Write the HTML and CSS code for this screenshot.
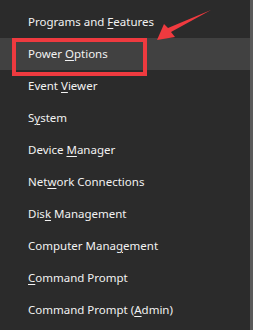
FILE: index.html
```html
<!DOCTYPE html>
<html>
<head>
<meta charset="utf-8">
<link rel="stylesheet" href="styles.css">
</head>
<body>
<div class="menu">
  <ul class="items">
    <li class="item">Programs and <u>F</u>eatures</li>
    <li class="item active">Power <u>O</u>ptions</li>
    <li class="item">Event <u>V</u>iewer</li>
    <li class="item">S<u>y</u>stem</li>
    <li class="item">Device <u>M</u>anager</li>
    <li class="item">Net<u>w</u>ork Connections</li>
    <li class="item">Dis<u>k</u> Management</li>
    <li class="item">Computer Mana<u>g</u>ement</li>
    <li class="item"><u>C</u>ommand Prompt</li>
    <li class="item">Command Prompt (<u>A</u>dmin)</li>
  </ul>
  <div class="mark"></div>
  <svg class="arrow" width="60" height="34" viewBox="0 0 60 34">
    <polygon points="1,32 8,16 12,20 55,2 15,24 19,29" fill="#f03a3f"/>
  </svg>
</div>
</body>
</html>
```
FILE: styles.css
```css
html, body {
  margin: 0;
  padding: 0;
  background: #2b2b2b;
}
.menu {
  position: relative;
  width: 253px;
  height: 330px;
  background: #2b2b2b;
  box-sizing: border-box;
  border-right: 3px solid #595959;
  overflow: hidden;
}
.items {
  list-style: none;
  margin: 0;
  padding: 6px 0 0 0;
}
.item {
  height: 32px;
  line-height: 32px;
  padding-left: 28px;
  font-family: "Noto Sans", "Open Sans", sans-serif;
  font-size: 11.5px;
  color: #f2f2f2;
  white-space: nowrap;
}
.item u {
  text-decoration-thickness: 1px;
  text-underline-offset: 2px;
}
.item.active {
  background: #414141;
}
.mark {
  position: absolute;
  left: 12px;
  top: 38px;
  width: 135px;
  height: 38px;
  box-sizing: border-box;
  border: 4px solid #ee3a3f;
}
.arrow {
  position: absolute;
  left: 156px;
  top: 8px;
}
```
